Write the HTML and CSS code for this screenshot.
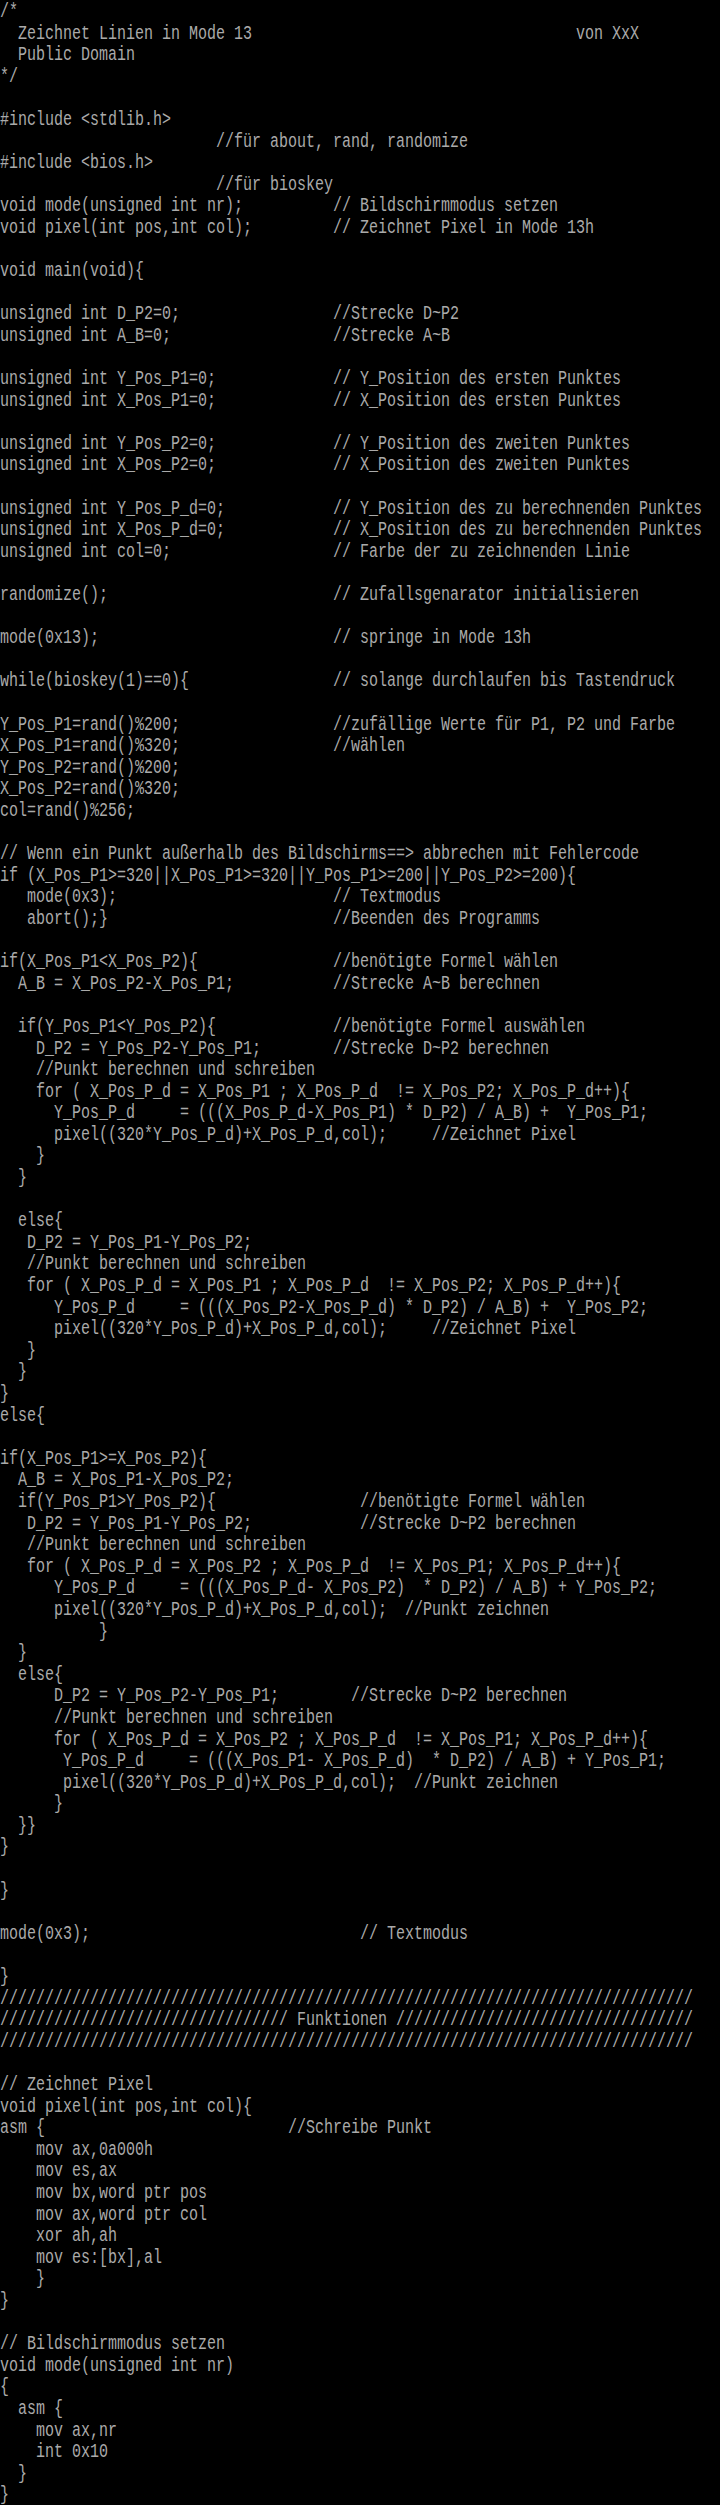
FILE: index.html
```html
<!DOCTYPE html>
<html lang="de">
<head>
    <meta charset="UTF-8">
    <meta name="viewport" content="width=device-width, initial-scale=1.0">
    <title>LINIEN.C</title>
    <link rel="stylesheet" href="styles.css">
</head>
<body>

<pre class="screen">/*
  Zeichnet Linien in Mode 13                                    von XxX
  Public Domain
*/

#include &lt;stdlib.h&gt;
                        //für about, rand, randomize
#include &lt;bios.h&gt;
                        //für bioskey
void mode(unsigned int nr);          // Bildschirmmodus setzen
void pixel(int pos,int col);         // Zeichnet Pixel in Mode 13h

void main(void){

unsigned int D_P2=0;                 //Strecke D~P2
unsigned int A_B=0;                  //Strecke A~B

unsigned int Y_Pos_P1=0;             // Y_Position des ersten Punktes
unsigned int X_Pos_P1=0;             // X_Position des ersten Punktes

unsigned int Y_Pos_P2=0;             // Y_Position des zweiten Punktes
unsigned int X_Pos_P2=0;             // X_Position des zweiten Punktes

unsigned int Y_Pos_P_d=0;            // Y_Position des zu berechnenden Punktes
unsigned int X_Pos_P_d=0;            // X_Position des zu berechnenden Punktes
unsigned int col=0;                  // Farbe der zu zeichnenden Linie

randomize();                         // Zufallsgenarator initialisieren

mode(0x13);                          // springe in Mode 13h

while(bioskey(1)==0){                // solange durchlaufen bis Tastendruck

Y_Pos_P1=rand()%200;                 //zufällige Werte für P1, P2 und Farbe
X_Pos_P1=rand()%320;                 //wählen
Y_Pos_P2=rand()%200;
X_Pos_P2=rand()%320;
col=rand()%256;

// Wenn ein Punkt außerhalb des Bildschirms==&gt; abbrechen mit Fehlercode
if (X_Pos_P1&gt;=320||X_Pos_P1&gt;=320||Y_Pos_P1&gt;=200||Y_Pos_P2&gt;=200){
   mode(0x3);                        // Textmodus
   abort();}                         //Beenden des Programms

if(X_Pos_P1&lt;X_Pos_P2){               //benötigte Formel wählen
  A_B = X_Pos_P2-X_Pos_P1;           //Strecke A~B berechnen

  if(Y_Pos_P1&lt;Y_Pos_P2){             //benötigte Formel auswählen
    D_P2 = Y_Pos_P2-Y_Pos_P1;        //Strecke D~P2 berechnen
    //Punkt berechnen und schreiben
    for ( X_Pos_P_d = X_Pos_P1 ; X_Pos_P_d  != X_Pos_P2; X_Pos_P_d++){
      Y_Pos_P_d     = (((X_Pos_P_d-X_Pos_P1) * D_P2) / A_B) +  Y_Pos_P1;
      pixel((320*Y_Pos_P_d)+X_Pos_P_d,col);     //Zeichnet Pixel
    }
  }

  else{
   D_P2 = Y_Pos_P1-Y_Pos_P2;
   //Punkt berechnen und schreiben
   for ( X_Pos_P_d = X_Pos_P1 ; X_Pos_P_d  != X_Pos_P2; X_Pos_P_d++){
      Y_Pos_P_d     = (((X_Pos_P2-X_Pos_P_d) * D_P2) / A_B) +  Y_Pos_P2;
      pixel((320*Y_Pos_P_d)+X_Pos_P_d,col);     //Zeichnet Pixel
   }
  }
}
else{

if(X_Pos_P1&gt;=X_Pos_P2){
  A_B = X_Pos_P1-X_Pos_P2;
  if(Y_Pos_P1&gt;Y_Pos_P2){                //benötigte Formel wählen
   D_P2 = Y_Pos_P1-Y_Pos_P2;            //Strecke D~P2 berechnen
   //Punkt berechnen und schreiben
   for ( X_Pos_P_d = X_Pos_P2 ; X_Pos_P_d  != X_Pos_P1; X_Pos_P_d++){
      Y_Pos_P_d     = (((X_Pos_P_d- X_Pos_P2)  * D_P2) / A_B) + Y_Pos_P2;
      pixel((320*Y_Pos_P_d)+X_Pos_P_d,col);  //Punkt zeichnen
           }
  }
  else{
      D_P2 = Y_Pos_P2-Y_Pos_P1;        //Strecke D~P2 berechnen
      //Punkt berechnen und schreiben
      for ( X_Pos_P_d = X_Pos_P2 ; X_Pos_P_d  != X_Pos_P1; X_Pos_P_d++){
       Y_Pos_P_d     = (((X_Pos_P1- X_Pos_P_d)  * D_P2) / A_B) + Y_Pos_P1;
       pixel((320*Y_Pos_P_d)+X_Pos_P_d,col);  //Punkt zeichnen
      }
  }}
}

}

mode(0x3);                              // Textmodus

}
/////////////////////////////////////////////////////////////////////////////
//////////////////////////////// Funktionen /////////////////////////////////
/////////////////////////////////////////////////////////////////////////////

// Zeichnet Pixel
void pixel(int pos,int col){
asm {                           //Schreibe Punkt
    mov ax,0a000h
    mov es,ax
    mov bx,word ptr pos
    mov ax,word ptr col
    xor ah,ah
    mov es:[bx],al
    }
}

// Bildschirmmodus setzen
void mode(unsigned int nr)
{
  asm {
    mov ax,nr
    int 0x10
  }
}</pre>

</body>
</html>
```

FILE: styles.css
```css
html, body {
    background-color: #000;
}
body {
    margin: 0;
    padding: 0;
    overflow: hidden;
}
/* DOS text screen: 9px cells, tall narrow glyphs */
.screen {
    margin: 0;
    padding: 1px 0 0 0;
    font-family: "Liberation Mono", "DejaVu Sans Mono", monospace;
    font-size: 20px;
    line-height: 21.6px;
    color: #aaaaaa;
    white-space: pre;
    transform: scaleX(0.75);
    transform-origin: 0 0;
}
```
